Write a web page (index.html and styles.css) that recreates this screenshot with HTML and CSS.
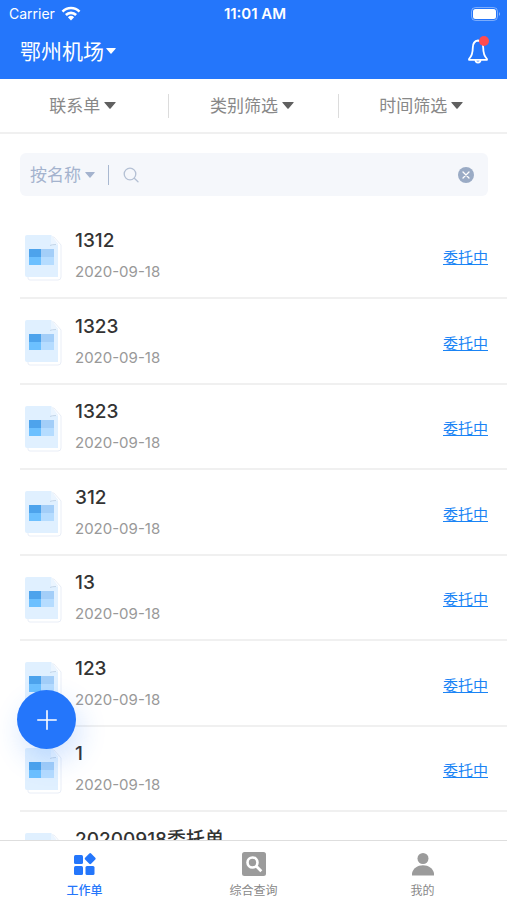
FILE: index.html
```html
<!DOCTYPE html>
<html lang="zh-CN">
  <head>
    <meta charset="UTF-8" />
    <meta name="viewport" content="width=device-width, initial-scale=1.0" />
    <title>工作单</title>
    <link rel="stylesheet" href="styles.css">
  </head>
  <body>
    <!-- shared icons -->
    <svg class="sprite" aria-hidden="true">
      <symbol id="caret" viewBox="0 0 12 7">
        <path d="M.8 0h10.4q.9 0 .3.7L6.6 6.5q-.6.7-1.2 0L.5.7Q-.1 0 .8 0z" fill="currentColor" />
      </symbol>
      <symbol id="doc" viewBox="0 -1 38 48">
        <path d="M4 3h26l7 8v32q0 3-3 3H6q-2 0-2-2z" fill="#fff" stroke="#e9eef7" />
        <path d="M3 1h24l7 9v33H3q-2 0-2-2V3q0-2 2-2z" fill="#e0f0ff" />
        <path d="M27 1l7 9v1h-5q-2 0-2-2z" fill="#ebf5ff" />
        <path d="M26 11.500q2-1 6-1" fill="none" stroke="#c3d5e8" />
        <path d="M5 15h12v8H5z" fill="#4da3ec" />
        <path d="M17 15h13v8H17z" fill="#a3cef8" />
        <path d="M5 23h12v8H5z" fill="#6cc0ff" />
        <path d="M17 23h13v8H17z" fill="#b5dcff" />
      </symbol>
    </svg>

    <header class="header">
      <div class="status-bar">
        <div class="status-carrier">
          <span>Carrier</span>
          <svg width="20" height="16" viewBox="0 0 20 16" fill="none" stroke="#fff" stroke-width="2.6">
            <path d="M1.5 5.6a12 12 0 0 1 17 0" />
            <path d="M4.9 9a7.200 7.200 0 0 1 10.200 0" />
            <path d="M10 14.600L6.900 11.300a4.500 4.500 0 0 1 6.200 0z" fill="#fff" stroke="none" />
          </svg>
        </div>
        <time class="status-time">11:01 AM</time>
        <svg class="status-battery" width="30" height="14" viewBox="0 0 30 14">
          <rect x=".5" y=".5" width="26" height="13" rx="4" fill="none" stroke="#fff" stroke-opacity=".4" />
          <rect x="2" y="2" width="23" height="10" rx="2.500" fill="#fff" />
          <path d="M28 5q2 2 0 4z" fill="#fff" fill-opacity=".5" />
        </svg>
      </div>
      <div class="nav-bar">
        <label class="picker picker-project">
          <select aria-label="项目">
            <option>鄂州机场</option>
          </select>
          <svg class="caret caret-small"><use href="#caret" /></svg>
        </label>
        <button class="bell" type="button" aria-label="消息">
          <svg width="22" height="26" viewBox="0 0 22 26" fill="none" stroke="#fff" stroke-width="1.8" stroke-linecap="round" stroke-linejoin="round">
            <path d="M11 2.500c-3.600.5-5.200 3.200-5.200 7.200 0 6-1 8.300-3.800 11.300v.8h18V21c-2.800-3-3.800-5.300-3.800-11.300 0-4-1.600-6.700-5.200-7.200z" />
            <path d="M8.500 22a2.500 2.500 0 0 0 5 0" />
          </svg>
          <span class="bell-dot"></span>
        </button>
      </div>
    </header>

    <div class="filters">
      <label class="picker filter">
        <select aria-label="单据类型">
          <option>联系单</option>
        </select>
        <svg class="caret"><use href="#caret" /></svg>
      </label>
      <label class="picker filter">
        <select aria-label="类别">
          <option>类别筛选</option>
        </select>
        <svg class="caret"><use href="#caret" /></svg>
      </label>
      <label class="picker filter">
        <select aria-label="时间">
          <option>时间筛选</option>
        </select>
        <svg class="caret"><use href="#caret" /></svg>
      </label>
    </div>

    <form class="search">
      <label class="picker search-type">
        <select aria-label="搜索方式">
          <option>按名称</option>
        </select>
        <svg class="caret caret-small"><use href="#caret" /></svg>
      </label>
      <svg width="16" height="16" viewBox="0 0 16 16" fill="none" stroke="#b4c0d4" stroke-width="1.300" stroke-linecap="round">
        <circle cx="7" cy="7" r="5.800" />
        <path d="M11.300 11.300l3.700 3.500" />
      </svg>
      <input class="search-input" type="text" aria-label="搜索" />
      <button class="search-clear" type="reset" aria-label="清除">
        <svg width="16" height="16" viewBox="0 0 16 16">
          <circle cx="8" cy="8" r="8" fill="#9aabc5" />
          <path d="M5 5l6 6M11 5l-6 6" stroke="#fff" stroke-width="1.300" stroke-linecap="round" />
        </svg>
      </button>
    </form>

    <main class="content">
      <ul class="list">
        <li class="item">
          <svg class="item-icon"><use href="#doc" /></svg>
          <div class="item-body">
            <h2 class="item-title">1312</h2>
            <time class="item-date">2020-09-18</time>
          </div>
          <a class="item-status" href="#">委托中</a>
        </li>
        <li class="item">
          <svg class="item-icon"><use href="#doc" /></svg>
          <div class="item-body">
            <h2 class="item-title">1323</h2>
            <time class="item-date">2020-09-18</time>
          </div>
          <a class="item-status" href="#">委托中</a>
        </li>
        <li class="item">
          <svg class="item-icon"><use href="#doc" /></svg>
          <div class="item-body">
            <h2 class="item-title">1323</h2>
            <time class="item-date">2020-09-18</time>
          </div>
          <a class="item-status" href="#">委托中</a>
        </li>
        <li class="item">
          <svg class="item-icon"><use href="#doc" /></svg>
          <div class="item-body">
            <h2 class="item-title">312</h2>
            <time class="item-date">2020-09-18</time>
          </div>
          <a class="item-status" href="#">委托中</a>
        </li>
        <li class="item">
          <svg class="item-icon"><use href="#doc" /></svg>
          <div class="item-body">
            <h2 class="item-title">13</h2>
            <time class="item-date">2020-09-18</time>
          </div>
          <a class="item-status" href="#">委托中</a>
        </li>
        <li class="item">
          <svg class="item-icon"><use href="#doc" /></svg>
          <div class="item-body">
            <h2 class="item-title">123</h2>
            <time class="item-date">2020-09-18</time>
          </div>
          <a class="item-status" href="#">委托中</a>
        </li>
        <li class="item">
          <svg class="item-icon"><use href="#doc" /></svg>
          <div class="item-body">
            <h2 class="item-title">1</h2>
            <time class="item-date">2020-09-18</time>
          </div>
          <a class="item-status" href="#">委托中</a>
        </li>
        <li class="item">
          <svg class="item-icon"><use href="#doc" /></svg>
          <div class="item-body">
            <h2 class="item-title">20200918委托单</h2>
            <time class="item-date">2020-09-18</time>
          </div>
          <a class="item-status" href="#">委托中</a>
        </li>
      </ul>
    </main>

    <button class="add" type="button" aria-label="新建">
      <svg width="20" height="20" viewBox="0 0 20 20" stroke="#fff" stroke-width="1.600" stroke-linecap="round">
        <path d="M10 .8v18.400M.8 10h18.400" />
      </svg>
    </button>

    <nav class="tabs">
      <a class="tab tab-active" href="#">
        <svg width="24" height="24" viewBox="0 0 24 24" fill="currentColor">
          <rect x="1" y="3" width="9" height="9" rx="1.500" />
          <rect x="1" y="14" width="9" height="9" rx="1.500" />
          <rect x="12.500" y="14" width="9" height="9" rx="1.500" />
          <path d="M16.300 1.500q.9-.9 1.800 0l4.200 4.200q.9.900 0 1.800l-4.200 4.200q-.9.900-1.800 0l-4.200-4.200q-.9-.9 0-1.800z" />
        </svg>
        <span>工作单</span>
      </a>
      <a class="tab" href="#">
        <svg width="24" height="24" viewBox="0 0 24 24">
          <rect y="0" width="24" height="24" rx="2.500" fill="#9b9b9b" />
          <circle cx="10.500" cy="10.500" r="5" fill="none" stroke="#fff" stroke-width="2.600" />
          <path d="M14.300 14.300l5 5" stroke="#fff" stroke-width="2.800" />
        </svg>
        <span>综合查询</span>
      </a>
      <a class="tab" href="#">
        <svg width="24" height="24" viewBox="0 0 24 24" fill="#9b9b9b">
          <circle cx="12" cy="6.500" r="5.500" />
          <path d="M1 23.500v-2.300C2 16.500 6.500 13.300 12 13.300s10 3.200 11 7.900v2.300z" />
        </svg>
        <span>我的</span>
      </a>
    </nav>
  </body>
</html>
```

FILE: styles.css
```css
* {
  box-sizing: border-box;
}

body {
  display: flex;
  flex-direction: column;
  height: 100vh;
  margin: 0;
  background-color: #fff;
  color: #333;
  font-family: Inter, "Noto Sans CJK SC", sans-serif;
  font-size: 16px;
}

svg {
  display: block;
  flex: none;
}

button {
  padding: 0;
  border: none;
  background: none;
  cursor: pointer;
}

.sprite {
  position: absolute;
  width: 0;
  height: 0;
}

.header {
  flex: none;
  background-color: #2476fb;
  color: #fff;
}

.status-bar {
  display: grid;
  grid-template-columns: 1fr auto 1fr;
  align-items: center;
  height: 27px;
  padding: 0 6px 0 9px;
  font-size: 14px;
}

.status-carrier {
  display: flex;
  align-items: center;
  gap: 6px;
}

.status-time {
  font-size: 15px;
  font-weight: 600;
}

.status-battery {
  justify-self: end;
}

.nav-bar {
  display: flex;
  align-items: center;
  justify-content: space-between;
  height: 52px;
  padding: 0 18px 4px 20px;
}

/* select with its own caret next to it */
.picker {
  display: flex;
  align-items: center;
  gap: 4px;
}

.picker select {
  appearance: none;
  padding: 0;
  border: none;
  background: none;
  color: inherit;
  font: inherit;
  cursor: pointer;
}

.caret {
  width: 12px;
  height: 7px;
}

.caret-small {
  width: 10px;
  height: 6px;
}

.picker-project {
  gap: 2px;
  font-size: 21px;
}

.bell {
  position: relative;
}

.bell-dot {
  position: absolute;
  top: -2px;
  right: 0;
  width: 10px;
  height: 10px;
  border-radius: 50%;
  background-color: #ff4b4f;
}

.filters {
  display: flex;
  flex: none;
  align-items: center;
  height: 55px;
  border-bottom: 2px solid #f0f0f0;
}

.filter {
  flex: 1;
  justify-content: center;
  height: 24px;
  padding-right: 3px;
  color: #606060;
  font-size: 17px;
}

.filter select {
  color: #888;
}

.filter + .filter {
  border-left: 1px solid #dcdcdc;
}

.search {
  display: flex;
  flex: none;
  align-items: center;
  gap: 14px;
  height: 43px;
  margin: 19px 19px 18px 20px;
  padding: 0 14px 0 10px;
  border-radius: 6px;
  background-color: #f5f7fb;
}

.search-type {
  height: 20px;
  padding-right: 13px;
  border-right: 1px solid #a9b8d0;
  color: #a4b3ce;
  font-size: 17px;
}

.search-input {
  flex: 1;
  min-width: 0;
  padding: 0;
  border: none;
  outline: none;
  background: none;
  color: #333;
  font: inherit;
}

.content {
  flex: 1;
  min-height: 0;
  overflow-y: auto;
  scrollbar-width: none;
}

.list {
  margin: 0;
  padding: 0 0 0 20px;
  list-style: none;
}

.item {
  display: flex;
  align-items: center;
  height: 85px;
  padding: 2px 19px 0 4px;
  border-bottom: 2px solid #f0f0f0;
}

.item:nth-child(even) {
  height: 86px;
}

.item-icon {
  width: 38px;
  height: 48px;
}

.item-body {
  flex: 1;
  min-width: 0;
  margin-left: 13px;
  padding-bottom: 4px;
}

.item-title {
  margin: 0 0 7px;
  font-size: 19px;
  font-weight: 500;
  line-height: 28px;
}

.item-date {
  display: block;
  color: #999;
  font-size: 15px;
  line-height: 20px;
}

.item-status {
  color: #1a84f5;
  font-size: 15px;
}

.add {
  position: fixed;
  bottom: 151px;
  left: 17px;
  display: flex;
  align-items: center;
  justify-content: center;
  width: 59px;
  height: 59px;
  border-radius: 50%;
  background-color: #2476fb;
  box-shadow: 4px 12px 28px rgba(36, 118, 251, 0.2);
}

.tabs {
  display: flex;
  flex: none;
  height: 60px;
  border-top: 1px solid #dedede;
  background-color: #fff;
}

.tab {
  display: flex;
  flex: 1;
  flex-direction: column;
  align-items: center;
  gap: 5px;
  padding-top: 11px;
  color: #888;
  font-size: 12px;
  line-height: 20px;
  text-decoration: none;
}

.tab-active {
  color: #2476fb;
  font-weight: 500;
}
```
